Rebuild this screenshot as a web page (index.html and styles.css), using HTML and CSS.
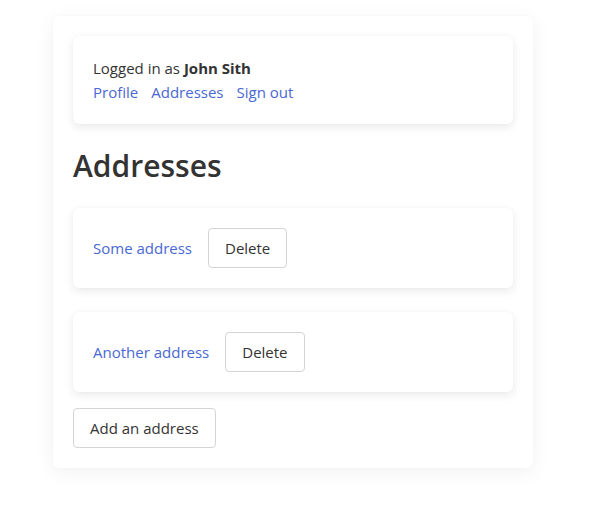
FILE: index.html
```html
<!DOCTYPE html>
<html>
<head>
<meta charset="utf-8">
<link rel="stylesheet" href="styles.css">
</head>
<body>
<div class="page">
  <div class="card session">
    <div class="who">Logged in as <strong>John Sith</strong></div>
    <nav class="nav">
      <a href="#">Profile</a>
      <a href="#">Addresses</a>
      <a href="#">Sign out</a>
    </nav>
  </div>
  <h1 class="title">Addresses</h1>
  <div class="card address">
    <a href="#">Some address</a>
    <button class="btn">Delete</button>
  </div>
  <div class="card address">
    <a href="#">Another address</a>
    <button class="btn">Delete</button>
  </div>
  <button class="btn add">Add an address</button>
</div>
</body>
</html>
```
FILE: styles.css
```css
html, body {
  margin: 0;
  padding: 0;
  background: #fff;
}
body {
  font-family: "Open Sans", "Noto Sans", sans-serif;
  font-size: 15px;
  line-height: 24px;
  color: #333;
  padding-bottom: 40px;
}
.page {
  width: 480px;
  box-sizing: border-box;
  margin: 16px 0 0 53px;
  padding: 20px;
  background: #fff;
  border-radius: 6px;
  box-shadow: 0 4px 20px rgba(0, 0, 0, 0.06), 0 0 2px rgba(0, 0, 0, 0.04);
}
.card {
  background: #fff;
  border-radius: 6px;
  padding: 20px;
  box-shadow: 0 3px 10px rgba(0, 0, 0, 0.09), 0 0 1px rgba(0, 0, 0, 0.05);
}
a {
  color: #4a68d2;
  text-decoration: none;
}
.nav {
  display: flex;
  gap: 13px;
}
.title {
  margin: 24px 0;
  font-size: 30px;
  line-height: 36px;
  font-weight: 600;
  color: #333;
}
.address {
  display: flex;
  align-items: center;
  gap: 16px;
  margin-bottom: 24px;
}
.address + .address {
  margin-bottom: 16px;
}
.btn {
  font-family: inherit;
  font-size: 15px;
  height: 40px;
  padding: 0 16px;
  background: #fff;
  color: #333;
  border: 1px solid #d4d4d4;
  border-radius: 4px;
}
```
